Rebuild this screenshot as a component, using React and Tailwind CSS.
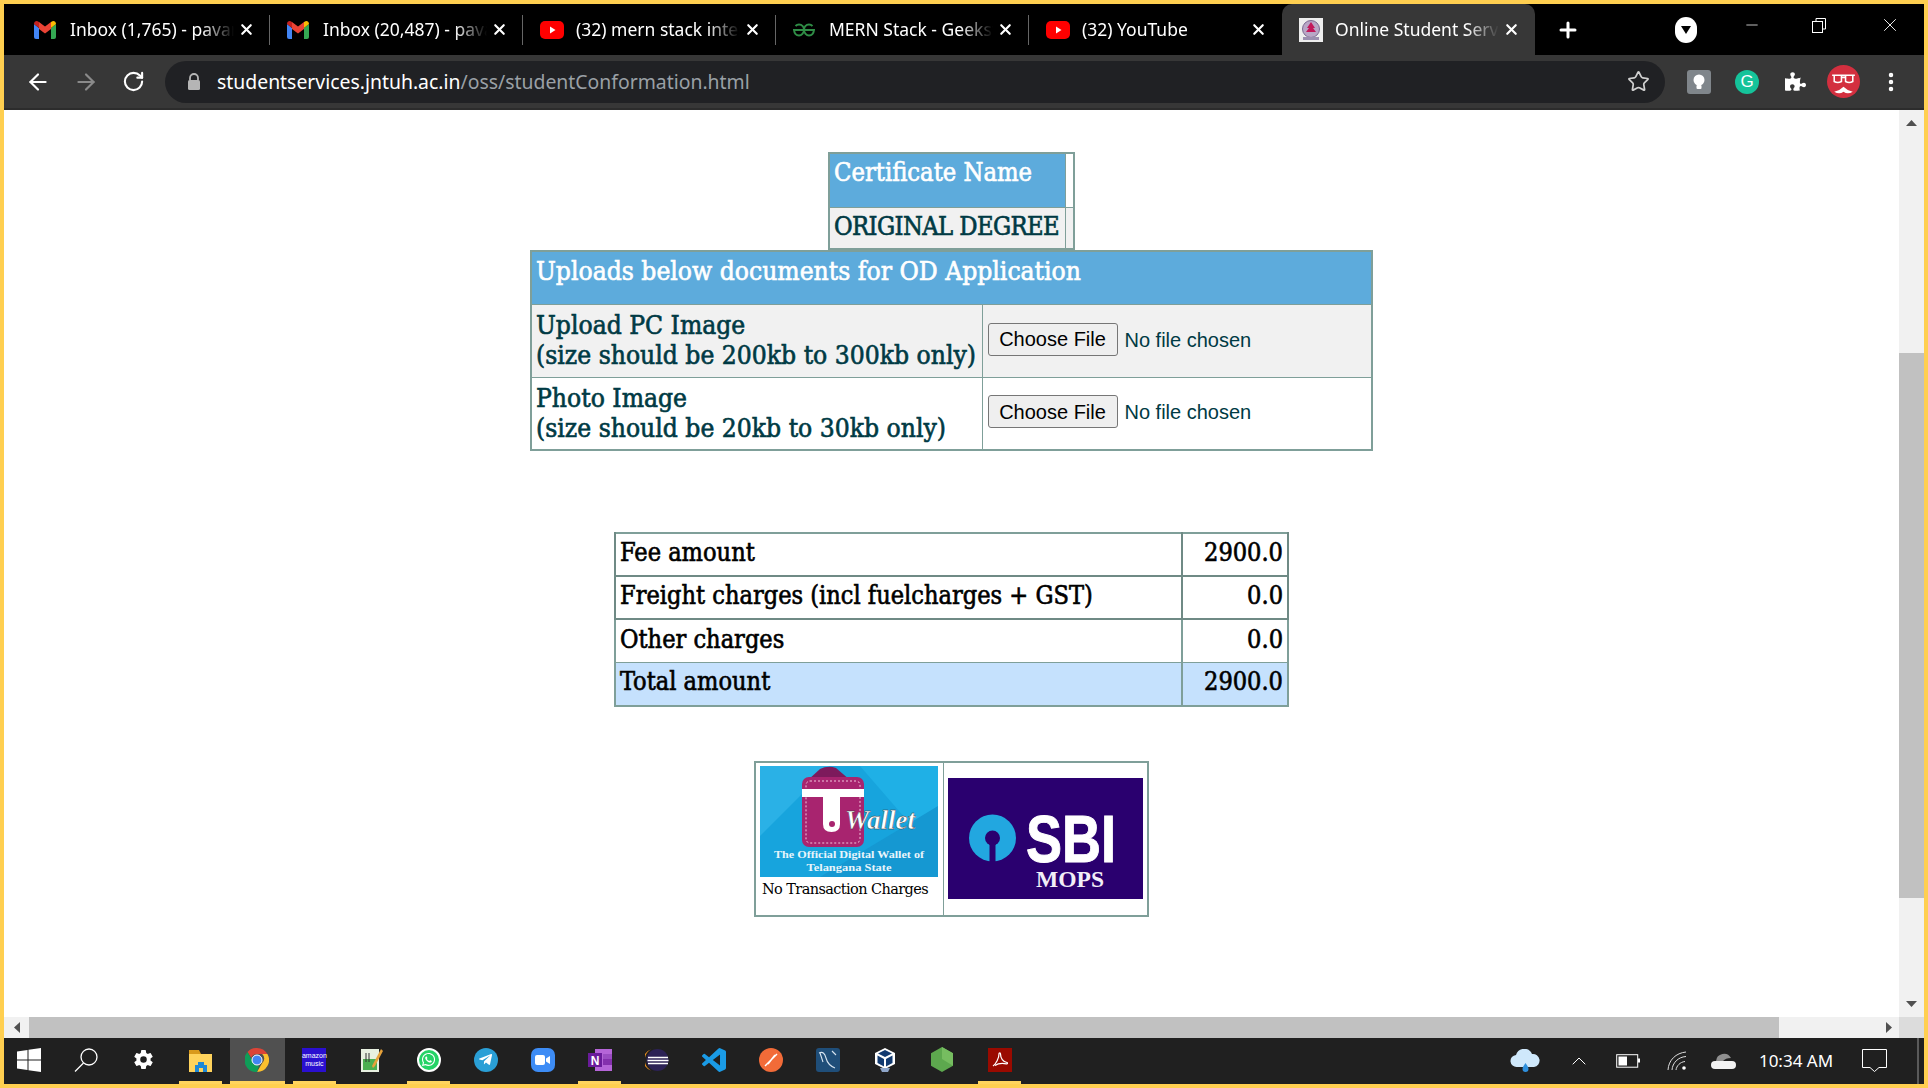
import { ArrowLeft, ArrowRight, RotateCw, Star, X, Plus, Minus, EllipsisVertical, ChevronUp } from 'lucide-react'
import { FaPuzzlePiece, FaTelegramPlane, FaWhatsapp } from 'react-icons/fa'
import { IoSettingsSharp } from 'react-icons/io5'

const UI_FONT = "font-['Noto_Sans',sans-serif]"

const GmailIcon = () => (
  <svg width="22" height="18" viewBox="0 0 22 18">
    <path d="M0 3v13a2 2 0 0 0 2 2h3V7z" fill="#4285f4" />
    <path d="M22 3v13a2 2 0 0 1-2 2h-3V7z" fill="#34a853" />
    <path d="M5 7 0 3C0 .5 2.5-.7 4.500.700L5 1z" fill="#c5221f" />
    <path d="M5 8V1l6 4.500L17 1v7l-6 4.500z" fill="#ea4335" />
    <path d="M17 7l5-4c0-2.500-2.500-3.700-4.500-2.300L17 1z" fill="#fbbc04" />
  </svg>
)

const YoutubeIcon = () => (
  <svg width="24" height="18" viewBox="0 0 24 18">
    <rect width="24" height="18" rx="5" fill="#f00" />
    <path d="M10 5.500v7l5.500-3.500z" fill="#fff" />
  </svg>
)

const GeeksIcon = () => (
  <svg width="22" height="14" viewBox="0 0 22 14" fill="none" stroke="#2f8d46" strokeWidth="2">
    <path d="M11 7H21C20.500 11 18.500 12.500 16 12.500S11 10 11 7 13 1.500 16 1.500c1.500 0 2.500.5 3.500 1.500" />
    <path d="M11 7H1C1.500 11 3.500 12.500 6 12.500S11 10 11 7 9 1.500 6 1.500C4.500 1.500 3.500 2 2.500 3" />
  </svg>
)

const CollegeIcon = () => (
  <svg width="24" height="24" viewBox="0 0 24 24">
    <rect width="24" height="24" fill="#eee" />
    <circle cx="12" cy="11" r="8.500" fill="#b9a6c6" stroke="#7c6a92" />
    <path d="M12 4l4 6h-2l3 4H7l3-4H8z" fill="#c2185b" />
    <rect x="4" y="19" width="16" height="3" fill="#9c8fb0" />
  </svg>
)

const TABS = [
  { title: 'Inbox (1,765) - pavan@gmail.com', icon: <GmailIcon /> },
  { title: 'Inbox (20,487) - pavan@gmail.com', icon: <GmailIcon /> },
  { title: '(32) mern stack interview questions', icon: <YoutubeIcon /> },
  { title: 'MERN Stack - GeeksforGeeks', icon: <GeeksIcon /> },
  { title: '(32) YouTube', icon: <YoutubeIcon /> },
]

function Tab({ title, icon, active, last }) {
  return (
    <div className={`w-[253px] shrink-0 flex items-center pl-[17px] pr-[15px] ${active ? 'bg-[#373737] rounded-t-[10px] h-[51px]' : 'h-[38px]'}`}>
      <div className="w-[36px] shrink-0 flex items-center justify-start">{icon}</div>
      <div className={`flex-1 overflow-hidden whitespace-nowrap text-[17.5px] text-white ${UI_FONT} [mask-image:linear-gradient(to_right,black_80%,transparent)]`}>
        {title}
      </div>
      <X size={17} strokeWidth={3} className="text-white ml-[4px] shrink-0" />
      {!last && !active && <div className="w-px h-[30px] bg-[#666] ml-[14px] -mr-[15px] shrink-0" />}
    </div>
  )
}

function TabStrip() {
  return (
    <div className="h-[51px] bg-black flex items-end pl-[13px] shrink-0">
      <div className="flex items-center h-[51px]">
        {TABS.map((t, i) => <Tab key={i} {...t} last={i === 4} />)}
        <Tab title="Online Student Services" icon={<CollegeIcon />} active />
      </div>
      <div className="flex items-center h-[51px]">
        <Plus size={24} strokeWidth={3} className="text-white ml-[21px]" />
        <div className="ml-[95px] w-[22px] h-[26px] rounded-full bg-white flex items-center justify-center">
          <svg width="10" height="8" viewBox="0 0 10 8"><path d="M0 0h10L5 8z" fill="#000" /></svg>
        </div>
        <Minus size={18} strokeWidth={1} className="text-white ml-[46px] -mt-[10px]" />
        <svg width="16" height="16" viewBox="0 0 16 16" fill="none" stroke="#fff" className="ml-[50px] -mt-[10px]">
          <rect x="1.500" y="4.500" width="10" height="11" />
          <path d="M5 4V1.500h9.500V12H12" />
        </svg>
        <X size={22} strokeWidth={1} className="text-white ml-[52px] -mt-[10px]" />
      </div>
    </div>
  )
}

function Toolbar() {
  return (
    <div className="h-[55px] bg-[#373737] border-b-2 border-[#2c2c2c] flex items-center shrink-0 pl-[21px]">
      <ArrowLeft size={26} strokeWidth={2} className="text-white shrink-0" />
      <ArrowRight size={26} strokeWidth={2} className="text-[#8a8a8a] ml-[22px] shrink-0" />
      <RotateCw size={23} strokeWidth={2.2} className="text-white ml-[23px] shrink-0" />
      <div className="ml-[20px] w-[1500px] h-[42px] rounded-full bg-[#202124] flex items-center pl-[22px] pr-[15px] shrink-0">
        <svg width="14" height="17" viewBox="0 0 14 17" className="shrink-0">
          <path d="M3 7V5a4 4 0 0 1 8 0v2" fill="none" stroke="#b5b5b5" strokeWidth="1.800" />
          <rect x="1" y="7" width="12" height="10" rx="1.500" fill="#b5b5b5" />
        </svg>
        <div className={`ml-[16px] text-[19.4px] whitespace-nowrap ${UI_FONT}`}>
          <span className="text-white">studentservices.jntuh.ac.in</span>
          <span className="text-[#9aa0a6]">/oss/studentConformation.html</span>
        </div>
        <Star size={23} strokeWidth={1.800} className="text-[#d0d0d0] ml-auto shrink-0" />
      </div>
      <div className="ml-[22px] w-[24px] h-[24px] rounded-[3px] bg-[#80868b] flex items-center justify-center shrink-0">
        <svg width="12" height="16" viewBox="0 0 12 16"><circle cx="6" cy="6" r="5.500" fill="#fff" /><rect x="3.500" y="11" width="5" height="4" rx="1" fill="#fff" /></svg>
      </div>
      <div className="ml-[24px] w-[24px] h-[24px] rounded-full bg-[#15c39a] flex items-center justify-center shrink-0 text-white text-[17px] font-['Liberation_Sans',sans-serif]">G</div>
      <FaPuzzlePiece size={21} className="text-white ml-[26px] shrink-0" />
      <svg width="33" height="33" viewBox="0 0 32 32" className="ml-[21px] shrink-0">
        <circle cx="16" cy="16" r="16" fill="#d32f3f" />
        <path d="M5 10h22M7 10h7v6q-3.500 2-7 0zM18 10h7v6q-3.500 2-7 0zM14 12h4" fill="none" stroke="#fff" strokeWidth="1.500" />
        <path d="M7 26q5-1 9-5 4 4 9 5-5 3-9 0-4 3-9 0z" fill="#fff" />
      </svg>
      <EllipsisVertical size={24} strokeWidth={2.5} className="text-white ml-[19px] shrink-0" />
    </div>
  )
}

function TWalletImage() {
  return (
    <svg width="178" height="111" viewBox="0 0 178 111" className="block">
      <rect width="178" height="111" fill="#17a4dd" />
      <path d="M0 0h70L0 70z" fill="#2ab1e6" />
      <path d="M178 0v90L100 0z" fill="#1fb0e6" />
      <path d="M178 111H60L178 40z" fill="#1598d2" />
      <path d="M48 14 60 3q8-4 16-1l14 12z" fill="#7d1a5c" />
      <rect x="42" y="11" width="62" height="70" rx="7" fill="#a8246f" />
      <rect x="46" y="15" width="54" height="62" rx="4" fill="none" stroke="#f2c5dd" strokeDasharray="2 2" />
      <rect x="42" y="23" width="62" height="8" fill="#fff" />
      <path d="M63 31h17v27q0 8-8.500 8T63 58z" fill="#fff" />
      <circle cx="72" cy="58" r="3" fill="#a8246f" />
      <text x="85" y="63" fontSize="28" fontWeight="700" fontStyle="italic" fill="#fff" stroke="#333" strokeWidth="0.400" fontFamily="'Liberation Serif', serif" textLength="70" lengthAdjust="spacingAndGlyphs">Wallet</text>
      <text x="89" y="92" fontSize="10" fontWeight="700" textAnchor="middle" fill="#e8f5fb" fontFamily="'Liberation Serif', serif" textLength="150" lengthAdjust="spacingAndGlyphs">The Official Digital Wallet of</text>
      <text x="89" y="105" fontSize="10" fontWeight="700" textAnchor="middle" fill="#e8f5fb" fontFamily="'Liberation Serif', serif" textLength="85" lengthAdjust="spacingAndGlyphs">Telangana State</text>
    </svg>
  )
}

function SbiImage() {
  return (
    <svg width="195" height="121" viewBox="0 0 195 121" className="block">
      <rect width="195" height="121" fill="#2a006f" />
      <circle cx="44.500" cy="60" r="23.500" fill="#22a7e0" />
      <circle cx="44.500" cy="60" r="7.500" fill="#2a006f" />
      <rect x="41.500" y="62" width="6" height="22" fill="#2a006f" />
      <text x="78" y="84" fontSize="66" fontWeight="700" fill="#fff" stroke="#fff" strokeWidth="1" fontFamily="'Liberation Sans', sans-serif" textLength="90" lengthAdjust="spacingAndGlyphs">SBI</text>
      <text x="88" y="109" fontSize="23" fontWeight="700" fill="#f2eef7" fontFamily="'Liberation Serif', serif" textLength="68" lengthAdjust="spacingAndGlyphs">MOPS</text>
    </svg>
  )
}

function FileInput() {
  return (
    <div className="flex items-center font-normal pb-[2px] [-webkit-text-stroke:0px]">
      <button className="w-[130px] h-[33px] -mt-[1px] bg-[#efefef] border border-[#767676] rounded-[3px] text-[20px] text-black font-['Liberation_Sans',sans-serif]">Choose File</button>
      <span className="ml-[7px] text-[20px] text-[#003a44] font-['Liberation_Sans',sans-serif]">No file chosen</span>
    </div>
  )
}

function PageContent() {
  const cell = 'border border-[#7f9f99] align-top'
  return (
    <div className="flex-1 bg-white flex flex-col items-center pt-[42px] font-['DejaVu_Serif_Condensed','DejaVu_Serif',serif] font-normal [-webkit-text-stroke:0.6px] text-[25.300px] leading-[30px] text-[#003a44] overflow-hidden">
      <table className="w-[247px] table-fixed border-2 border-[#7f9f99]">
        <colgroup><col className="w-[236px]" /><col /></colgroup>
        <tbody>
          <tr className="h-[54px]">
            <td className={`${cell} bg-[#5dabdc] text-white px-[4px] pt-[4px]`}>Certificate Name</td>
            <td className={`${cell} bg-white`} />
          </tr>
          <tr className="h-[42px] bg-[#f1f1f1]">
            <td className={`${cell} px-[4px] pt-[4px] whitespace-nowrap tracking-[-0.6px]`}>ORIGINAL DEGREE</td>
            <td className={cell} />
          </tr>
        </tbody>
      </table>

      <table className="w-[843px] table-fixed border-2 border-[#7f9f99] text-[26.200px]">
        <colgroup><col className="w-[451px]" /><col /></colgroup>
        <tbody>
          <tr className="h-[53px]">
            <td colSpan={2} className={`${cell} bg-[#5dabdc] text-white px-[4px] pt-[4px]`}>Uploads below documents for OD Application</td>
          </tr>
          <tr className="h-[73px] bg-[#f1f1f1]">
            <td className={`${cell} px-[4px] pt-[5px]`}>Upload PC Image<br />(size should be 200kb to 300kb only)</td>
            <td className={`${cell} px-[5px] !align-middle`}><FileInput /></td>
          </tr>
          <tr className="h-[73px]">
            <td className={`${cell} px-[4px] pt-[5px]`}>Photo Image<br />(size should be 20kb to 30kb only)</td>
            <td className={`${cell} px-[5px] !align-middle`}><FileInput /></td>
          </tr>
        </tbody>
      </table>

      <table className="mt-[81px] w-[675px] table-fixed border-2 border-[#7f9f99] text-black text-[25.100px]">
        <colgroup><col className="w-[567px]" /><col /></colgroup>
        <tbody>
          {[
            ['Fee amount', '2900.0'],
            ['Freight charges (incl fuelcharges + GST)', '0.0'],
            ['Other charges', '0.0'],
            ['Total amount', '2900.0'],
          ].map(([label, amount], i) => {
            const rowCell = i < 2 ? 'border-b-2 border-x-2 border-[#6f8a85] !align-middle px-[4px] pb-[3px]' : 'border border-x-2 border-[#7f9f99] !align-middle px-[4px] pb-[3px]'
            return (
              <tr key={label} className={`h-[43.200px] ${i === 3 ? 'bg-[#c5e1fd]' : ''}`}>
                <td className={rowCell}>{label}</td>
                <td className={`${rowCell} text-right`}>{amount}</td>
              </tr>
            )
          })}
        </tbody>
      </table>

      <table className="mt-[54px] w-[395px] table-fixed border-2 border-[#7f9f99]">
        <colgroup><col className="w-[188px]" /><col /></colgroup>
        <tbody>
          <tr className="h-[154px]">
            <td className={`${cell} px-[4px] pt-[3px]`}>
              <TWalletImage />
              <div className="text-[14.500px] leading-[24px] text-black font-normal [-webkit-text-stroke:0px] font-['DejaVu_Serif',serif] whitespace-nowrap tracking-[-0.6px] pl-[2px]">No Transaction Charges</div>
            </td>
            <td className={`${cell} !align-middle px-[4px]`}><SbiImage /></td>
          </tr>
        </tbody>
      </table>
    </div>
  )
}

function Taskbar() {
  const Slot = ({ children, underline, active, className = 'w-[57.100px]' }) => (
    <div className={`${className} h-[46px] shrink-0 flex flex-col items-center`}>
      <div className={`flex-1 w-[55px] flex items-center justify-center ${active ? 'bg-[#505050]' : ''}`}>{children}</div>
      <div className={`h-[3px] ${active ? 'w-[55px]' : 'w-[43px]'} ${underline ? 'bg-[#ffd45e]' : ''}`} />
    </div>
  )
  return (
    <div className="h-[46px] bg-[#202020] flex shrink-0">
      <Slot className="w-[50px] mr-[3.500px]">
        <svg width="24" height="24" viewBox="0 0 24 24" fill="#fff"><path d="M0 3.500 10.500 2v9.500H0zM11.500 1.800 24 0v11.500H11.500zM0 12.500h10.500V22L0 20.500zM11.500 12.500H24V24l-12.500-1.800z" /></svg>
      </Slot>
      <Slot>
        <svg width="24" height="24" viewBox="0 0 24 24" fill="none" stroke="#fff" strokeWidth="1.300"><circle cx="15" cy="9" r="8" /><path d="M9.500 15 1 23.500" /></svg>
      </Slot>
      <Slot><IoSettingsSharp size={21} className="text-white" /></Slot>
      <Slot underline>
        <svg width="23" height="24" viewBox="0 0 23 24"><path d="M0 2h10l2 4h-12z" fill="#d99a1c" /><rect y="6" width="23" height="18" fill="#ffd35c" /><path d="M6 24v-7h3v-3h6v3h3v7h-4v-4h-4v4z" fill="#1e88d6" /></svg>
      </Slot>
      <Slot underline active>
        <svg width="24" height="24" viewBox="0 0 24 24">
          <path d="M12 0a12 12 0 0 1 10.400 6H12a6 6 0 0 0-5.700 4L2.500 4A12 12 0 0 1 12 0z" fill="#db4437" />
          <path d="M22.400 6A12 12 0 0 1 12 24l5.200-9a6 6 0 0 0 0-9z" fill="#fbc02d" />
          <path d="M2.500 4 7 12a6 6 0 0 0 7 5.500L12 24A12 12 0 0 1 2.500 4z" fill="#0f9d58" />
          <circle cx="12" cy="12" r="5" fill="#4285f4" stroke="#fff" />
        </svg>
      </Slot>
      <Slot underline>
        <div className="w-[24px] h-[24px] bg-[#2a0fd0] flex flex-col items-center justify-center text-white text-[7px] leading-[8px] font-['Liberation_Sans',sans-serif]"><span>amazon</span><span>music</span></div>
      </Slot>
      <Slot>
        <svg width="24" height="24" viewBox="0 0 24 24"><rect x="1" y="1" width="18" height="23" fill="#e8f0e0" /><rect x="3" y="11" width="14" height="11" fill="#4caf50" /><path d="M6 5v9M9 5v9" stroke="#333" /><path d="M21 1 12 18l1 2 2-2 8-15z" fill="#e6a13a" /></svg>
      </Slot>
      <Slot underline>
        <div className="w-[24px] h-[24px] rounded-full bg-[#25d366] border-2 border-white flex items-center justify-center"><FaWhatsapp size={15} className="text-white" /></div>
      </Slot>
      <Slot>
        <div className="w-[24px] h-[24px] rounded-full bg-[#2a9fd6] flex items-center justify-center"><FaTelegramPlane size={15} className="text-white" /></div>
      </Slot>
      <Slot>
        <div className="w-[24px] h-[24px] rounded-[7px] bg-[#3d8cf5] flex items-center justify-center">
          <svg width="15" height="10" viewBox="0 0 15 10" fill="#fff"><rect width="10" height="10" rx="2" /><path d="M11 3.500 15 1v8l-4-2.500z" /></svg>
        </div>
      </Slot>
      <Slot underline>
        <svg width="24" height="24" viewBox="0 0 24 24"><rect x="7" y="1" width="17" height="22" fill="#b565d8" /><rect x="15" y="6" width="9" height="5" fill="#9a4dc2" /><rect x="15" y="11" width="9" height="6" fill="#8430ad" /><rect y="5" width="14" height="14" fill="#6a1b9a" /><text x="7" y="16.500" fontSize="12" fontWeight="700" textAnchor="middle" fill="#fff" fontFamily="'Liberation Sans', sans-serif">N</text></svg>
      </Slot>
      <Slot>
        <svg width="24" height="24" viewBox="0 0 24 24"><circle cx="12.500" cy="12" r="11" fill="#2c2255" /><path d="M6 1.500a11 11 0 0 0 0 21A12 12 0 0 1 6 1.500z" fill="#f7941e" /><path d="M3 9.500h20M2.500 12.500h21M3 15.500h20" stroke="#fff" strokeWidth="1.300" /></svg>
      </Slot>
      <Slot>
        <svg width="24" height="24" viewBox="0 0 24 24"><path d="M23.150 2.587 18.210.21a1.494 1.494 0 0 0-1.705.29l-9.460 8.630-4.120-3.128a.999.999 0 0 0-1.276.057L.327 7.261A1 1 0 0 0 .326 8.740L3.899 12 .326 15.260a1 1 0 0 0 .001 1.479L1.650 17.940a.999.999 0 0 0 1.276.057l4.120-3.128 9.460 8.630a1.492 1.492 0 0 0 1.704.290l4.942-2.377A1.500 1.500 0 0 0 24 20.060V3.939a1.500 1.500 0 0 0-.850-1.352zm-5.146 14.861L10.826 12l7.178-5.448v10.896z" fill="#1a9be6" /></svg>
      </Slot>
      <Slot>
        <svg width="24" height="24" viewBox="0 0 24 24"><circle cx="12" cy="12" r="12" fill="#f26b38" /><path d="M6 18 18 6M9 16l7-9" stroke="#fff" strokeWidth="1.500" /></svg>
      </Slot>
      <Slot>
        <svg width="24" height="24" viewBox="0 0 24 24"><rect width="24" height="24" rx="3" fill="#1f4e79" /><path d="M3 5c4-2 6 1 7 5s4 8 9 10M4 5l3 9M16 3l4 4" fill="none" stroke="#d6e4f0" strokeWidth="1.100" /></svg>
      </Slot>
      <Slot>
        <svg width="22" height="26" viewBox="0 0 22 26"><path d="M11 1 21 6v11l-10 5L1 17V6z" fill="#fff" /><path d="M11 3 18 6.500 11 10 4 6.500z" fill="#123a70" /><path d="M3.500 8.500 10 12v7.500l-6.500-3.500zM18.500 8.500 12 12v7.500l6.500-3.500z" fill="#123a70" /><path d="M6 21h10l-2 4H8z" fill="#8fa6c9" /></svg>
      </Slot>
      <Slot>
        <svg width="22" height="25" viewBox="0 0 22 25"><path d="M11 0 22 6.250v12.500L11 25 0 18.750V6.250z" fill="#5da84e" /><path d="M11 0 22 6.250v12.500L11 12z" fill="#76bd60" /></svg>
      </Slot>
      <Slot underline>
        <div className="w-[24px] h-[24px] bg-[#9a0a00] flex items-center justify-center">
          <svg width="16" height="16" viewBox="0 0 16 16" fill="none" stroke="#fff" strokeWidth="1.200"><path d="M1 14C4 12 7 6 7 2c0-1.500 1.500-1.500 1.500 0C8.500 6 11 10 15 10.500c1 .2.5 1.500-.5 1.300C10 11 5 12 3 13.500" /></svg>
        </div>
      </Slot>

      <div className="ml-auto flex items-center">
        <div className="w-[52px] flex justify-center">
          <svg width="31" height="24" viewBox="0 0 31 24"><path d="M7 18a6 6 0 0 1-1-12 8.500 8.500 0 0 1 16-1 6.500 6.500 0 0 1 2 13z" fill="#cfe8fb" /><path d="M15.500 14c2 3 3 4 3 6a3 3 0 0 1-6 0c0-2 1-3 3-6z" fill="#2e8fdc" /></svg>
        </div>
        <div className="w-[52px] pl-[3px] flex justify-center"><ChevronUp size={24} strokeWidth={1} className="text-white" /></div>
        <div className="w-[49px] flex justify-center">
          <svg width="24" height="14" viewBox="0 0 24 14" fill="none"><rect x=".7" y=".7" width="21" height="12.500" stroke="#fff" /><rect x="2.500" y="2.500" width="8.500" height="9" fill="#fff" /><rect x="22" y="4.500" width="2" height="4" fill="#fff" /></svg>
        </div>
        <div className="w-[49px] flex justify-center">
          <svg width="20" height="20" viewBox="0 0 20 20" fill="none" stroke="#ddd" strokeWidth="1"><path d="M1 19C1.500 9 9 2 19 1M5 19c.5-7 6-13 14-13.500M9 19c.5-4 4-8 9-8.500" /><circle cx="17" cy="17" r="1.800" fill="#fff" stroke="none" /></svg>
        </div>
        <div className="w-[44px] flex justify-center">
          <svg width="25" height="16" viewBox="0 0 25 16"><path d="M4 16a4 4 0 0 1 0-8h17a4 4 0 0 1 0 8z" fill="#f2f2f2" /><path d="M5 8a8 8 0 0 1 15-3c-4 0-6 1-8 3z" fill="#8f8f8f" /></svg>
        </div>
        <div className={`w-[102px] text-center text-[17px] text-white ${UI_FONT}`}>10:34 AM</div>
        <div className="w-[54px] flex justify-center">
          <svg width="25" height="24" viewBox="0 0 25 24" fill="none" stroke="#fff" strokeWidth="1"><path d="M.5.500h24v18h-7.500l-4.500 4-4.500-4H.5z" /></svg>
        </div>
        <div className="w-[16px]" />
        <div className="w-[2px] h-full bg-[#5a5a5a]" />
        <div className="w-[5px]" />
      </div>
    </div>
  )
}

export default function App() {
  return (
    <div className="w-full h-screen bg-[#ffcf50] p-[4px] overflow-hidden">
      <div className="w-full h-full flex flex-col">
        <TabStrip />
        <Toolbar />
        <div className="flex-1 flex min-h-0">
          <PageContent />
          <div className="w-[25px] bg-[#f1f1f1] flex flex-col shrink-0">
            <div className="h-[26px] flex items-center justify-center text-[#505050]">
              <svg width="11" height="6" viewBox="0 0 11 6"><path d="M5.500 0 11 6H0z" fill="currentColor" /></svg>
            </div>
            <div className="h-[217px]" />
            <div className="h-[545px] bg-[#c1c1c1]" />
            <div className="flex-1" />
            <div className="h-[27px] flex items-center justify-center text-[#505050]">
              <svg width="11" height="6" viewBox="0 0 11 6"><path d="M5.500 6 11 0H0z" fill="currentColor" /></svg>
            </div>
          </div>
        </div>
        <div className="h-[21px] flex bg-[#f1f1f1] shrink-0">
          <div className="w-[25px] flex items-center justify-center text-[#505050]">
            <svg width="6" height="11" viewBox="0 0 6 11"><path d="M0 5.500 6 0v11z" fill="currentColor" /></svg>
          </div>
          <div className="w-[1750px] bg-[#c1c1c1]" />
          <div className="flex-1 flex items-center justify-end pr-[7px] text-[#505050]">
            <svg width="6" height="11" viewBox="0 0 6 11"><path d="M6 5.500 0 0v11z" fill="currentColor" /></svg>
          </div>
          <div className="w-[25px] bg-[#dcdcdc]" />
        </div>
        <Taskbar />
      </div>
    </div>
  )
}
